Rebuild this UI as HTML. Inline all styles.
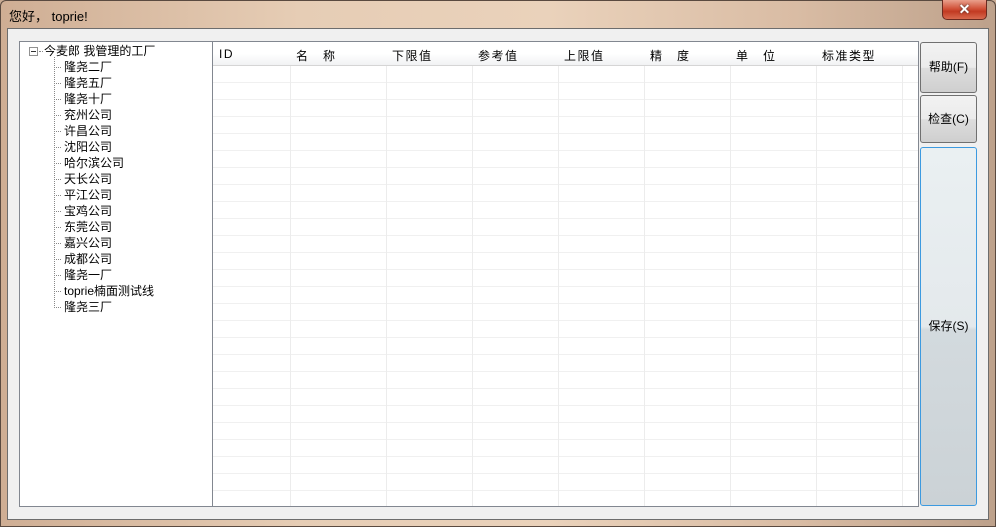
<!DOCTYPE html>
<html><head><meta charset="utf-8">
<style>
*{margin:0;padding:0;box-sizing:border-box}
body{width:996px;height:527px;overflow:hidden;background:#c9ab93;font-family:"Liberation Sans","Noto Sans CJK SC",sans-serif;font-size:12px;color:#000;position:relative}
.frame{position:absolute;left:0;top:0;width:996px;height:527px;border:1px solid #5a4a40;border-radius:6px 6px 0 0;background:linear-gradient(90deg,#cfae94 0%,#e6cdb5 30%,#ead2bb 55%,#d9bca4 80%,#bda18b 100%)}
.title{position:absolute;left:9px;top:6px;font-size:13px;color:#000}
.close{position:absolute;left:942px;top:0;width:45px;height:20px;border:1px solid #6b2a20;border-top:none;border-radius:0 0 5px 5px;background:linear-gradient(#e9a08c,#d1533a 45%,#c23a22 60%,#d86a4e);color:#fff;text-align:center;font-weight:bold;font-size:14px;line-height:18px;text-shadow:0 0 2px #333}
.client{position:absolute;left:7px;top:28px;width:982px;height:492px;background:#f0f0f0;border:1px solid #6d6d6d}
.tree{position:absolute;left:19px;top:41px;width:194px;height:466px;background:#fff;border:1px solid #828790}
.grid{position:absolute;left:212px;top:41px;width:707px;height:466px;background:#fff;border:1px solid #828790;overflow:hidden}
.hdr{position:absolute;left:0;top:0;width:705px;height:24px;background:linear-gradient(#fff,#fff 50%,#f1f2f4);border-bottom:1px solid #d5d5d5}
.hdr span{position:absolute;top:5px;letter-spacing:1.5px}
.rows{position:absolute;left:0;top:24px;width:705px;height:440px;background:repeating-linear-gradient(#fff 0,#fff 16px,#f0f0f0 16px,#f0f0f0 17px)}
.vl{position:absolute;top:0;width:1px;height:466px;background:#ececec}
.btn{position:absolute;left:920px;width:57px;border:1px solid #707070;border-radius:3px;background:linear-gradient(#f2f2f2,#ebebeb 50%,#dddddd 51%,#cfcfcf);text-align:center;font-size:12px}
.save{border:1px solid #3c9ae0;background:linear-gradient(#eaf0f2,#e4e9ec 50%,#d3dade 51%,#cbd2d6)}
.ti{position:absolute;left:64px;white-space:nowrap;line-height:16px}
.hd{position:absolute;left:54px;width:7px;border-top:1px dotted #888}
</style></head><body>
<div class="frame"></div>
<div class="title">您好， toprie!</div>
<div class="close">✕</div>
<div class="client"></div>
<div class="tree">
  <div style="position:absolute;left:9px;top:5px;width:9px;height:9px;border:1px solid #919191;background:#fff"><div style="position:absolute;left:1px;top:3px;width:5px;height:1px;background:#333"></div></div>
  <div style="position:absolute;left:19px;top:9px;width:4px;border-top:1px dotted #888"></div>
  <div style="position:absolute;left:24px;top:1px;line-height:16px;white-space:nowrap">今麦郎 我管理的工厂</div>
  <div style="position:absolute;left:34px;top:15px;height:251px;border-left:1px dotted #888"></div>
</div>
<div style="position:absolute;left:0;top:0">
<div class="hd" style="top:67px"></div><div class="ti" style="top:59px">隆尧二厂</div>
<div class="hd" style="top:83px"></div><div class="ti" style="top:75px">隆尧五厂</div>
<div class="hd" style="top:99px"></div><div class="ti" style="top:91px">隆尧十厂</div>
<div class="hd" style="top:115px"></div><div class="ti" style="top:107px">兖州公司</div>
<div class="hd" style="top:131px"></div><div class="ti" style="top:123px">许昌公司</div>
<div class="hd" style="top:147px"></div><div class="ti" style="top:139px">沈阳公司</div>
<div class="hd" style="top:163px"></div><div class="ti" style="top:155px">哈尔滨公司</div>
<div class="hd" style="top:179px"></div><div class="ti" style="top:171px">天长公司</div>
<div class="hd" style="top:195px"></div><div class="ti" style="top:187px">平江公司</div>
<div class="hd" style="top:211px"></div><div class="ti" style="top:203px">宝鸡公司</div>
<div class="hd" style="top:227px"></div><div class="ti" style="top:219px">东莞公司</div>
<div class="hd" style="top:243px"></div><div class="ti" style="top:235px">嘉兴公司</div>
<div class="hd" style="top:259px"></div><div class="ti" style="top:251px">成都公司</div>
<div class="hd" style="top:275px"></div><div class="ti" style="top:267px">隆尧一厂</div>
<div class="hd" style="top:291px"></div><div class="ti" style="top:283px">toprie楠面测试线</div>
<div class="hd" style="top:307px"></div><div class="ti" style="top:299px">隆尧三厂</div>
</div>
<div class="grid">
  <div class="rows"></div>
  <div class="vl" style="left:77px"></div><div class="vl" style="left:173px"></div><div class="vl" style="left:259px"></div><div class="vl" style="left:345px"></div><div class="vl" style="left:431px"></div><div class="vl" style="left:517px"></div><div class="vl" style="left:603px"></div><div class="vl" style="left:689px"></div>
  <div class="hdr">
    <span style="left:6px">ID</span><span style="left:83px">名　称</span><span style="left:179px">下限值</span><span style="left:265px">参考值</span><span style="left:351px">上限值</span><span style="left:437px">精　度</span><span style="left:523px">单　位</span><span style="left:609px">标准类型</span>
  </div>
</div>
<div class="btn" style="top:42px;height:51px;line-height:49px">帮助(F)</div>
<div class="btn" style="top:95px;height:48px;line-height:46px">检查(C)</div>
<div class="btn save" style="top:147px;height:359px;line-height:357px">保存(S)</div>
</body></html>
